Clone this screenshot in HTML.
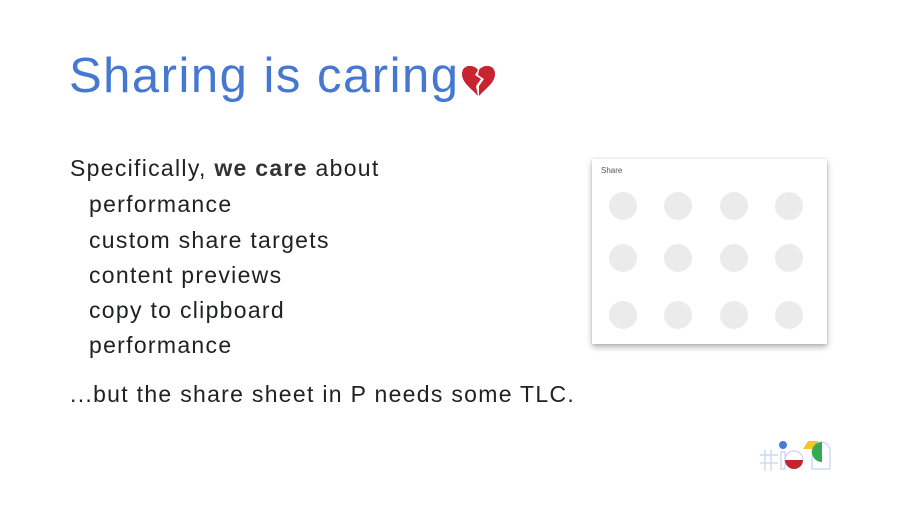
<!DOCTYPE html>
<html><head><style>
body{margin:0;width:900px;height:505px;background:#fff;position:relative;overflow:hidden;font-family:"Liberation Sans",sans-serif;}
.t{position:absolute;left:69px;top:48px;font-size:49px;color:#4677d1;white-space:nowrap;letter-spacing:1.5px}
.l{position:absolute;font-size:23px;color:#202124;white-space:nowrap;line-height:26px;letter-spacing:1.3px}
.card{position:absolute;left:592px;top:159px;width:235px;height:185px;background:#fff;box-shadow:0 3px 6px rgba(0,0,0,.3),0 0 2px rgba(0,0,0,.15)}
.c{position:absolute;width:28px;height:28px;border-radius:50%;background:#ebebeb}
</style></head><body>
<div class="t">Sharing is caring</div>
<svg style="position:absolute;left:460px;top:64px" width="37" height="33" viewBox="0 0 37 33">
<path d="M18 6 C14 0 2 0 2 10 C2 19 12 25 18 32 L16 22 L21 15 L15 11 Z" fill="#c8232e"/>
<path d="M19 6 C23 0 35 0 35 10 C35 19 25 25 19 32 L19 22 L24 15 L18 11 Z" fill="#c8232e"/>
</svg>
<div class="l" style="left:70px;top:155px">Specifically, <b style="color:#333">we care</b> about</div>
<div class="l" style="left:89px;top:191px">performance</div>
<div class="l" style="left:89px;top:227px">custom share targets</div>
<div class="l" style="left:89px;top:262px">content previews</div>
<div class="l" style="left:89px;top:297px">copy to clipboard</div>
<div class="l" style="left:89px;top:332px">performance</div>
<div class="l" style="left:70px;top:381px">...but the share sheet in P needs some TLC.</div>
<div class="card">
<div style="position:absolute;left:9px;top:7px;font-size:8px;color:#555">Share</div>
<div class="c" style="left:17px;top:33px"></div><div class="c" style="left:72px;top:33px"></div><div class="c" style="left:128px;top:33px"></div><div class="c" style="left:183px;top:33px"></div>
<div class="c" style="left:17px;top:85px"></div><div class="c" style="left:72px;top:85px"></div><div class="c" style="left:128px;top:85px"></div><div class="c" style="left:183px;top:85px"></div>
<div class="c" style="left:17px;top:142px"></div><div class="c" style="left:72px;top:142px"></div><div class="c" style="left:128px;top:142px"></div><div class="c" style="left:183px;top:142px"></div>
</div>
<svg style="position:absolute;left:750px;top:430px" width="100" height="50" viewBox="0 0 100 50">
<g stroke="#c5d3ea" stroke-width="1.2" fill="none">
<path d="M10 25h18M10 33h18M15 20v21M21 20v21"/>
<path d="M31 22h4v17h-4z"/>
<path d="M35 30a9 9 0 0 1 18 0"/>
<path d="M62 39V21a9 9 0 0 1 18 0v18z"/>
</g>
<circle cx="33" cy="15" r="4" fill="#4a7bd6"/>
<path d="M35 30a9 9 0 0 0 18 0z" fill="#c0262e"/>
<path d="M58 11h10l-4 8h-11z" fill="#f4c430"/>
<path d="M72 12a10 10 0 0 0 0 20z" fill="#34a853"/>
</svg>
</body></html>
